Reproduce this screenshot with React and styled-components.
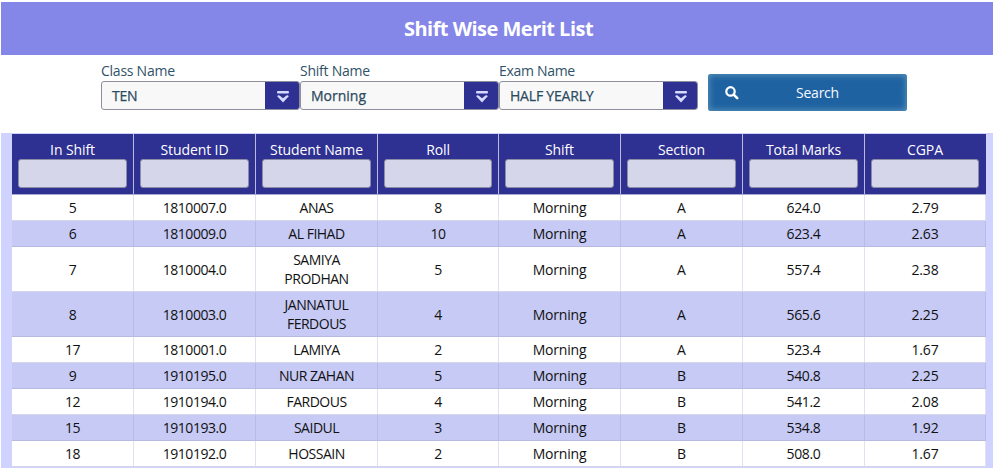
import React from "react";
import styled, { createGlobalStyle } from "styled-components";

const GlobalStyle = createGlobalStyle`
  * { box-sizing: border-box; }
  body {
    margin: 0;
    background: #fff;
    overflow: hidden;
    font-family: "Open Sans", "Noto Sans", sans-serif;
    font-size: 14px;
  }
`;

const Page = styled.main`
  height: 468px;
  padding: 2px 0 0 1px;
  overflow: hidden;
`;

const Banner = styled.h1`
  height: 53px;
  margin: 0;
  padding: 0 0 1px 3px;
  display: flex;
  align-items: center;
  justify-content: center;
  background: #8486e8;
  color: #fff;
  font-size: 20px;
  font-weight: 700;
  letter-spacing: -0.52px;
`;

const Filters = styled.form`
  display: flex;
  align-items: flex-start;
  height: 78px;
  padding: 6px 0 0 100px;
`;

const Field = styled.div`
  width: 199px;
`;

const FieldLabel = styled.label`
  display: block;
  height: 20px;
  line-height: 19px;
  color: #305268;
  letter-spacing: ${(p) => p.$track};
`;

const SelectBox = styled.div`
  display: flex;
  height: 29px;
  border: 1px solid #8d8f9f;
  border-radius: 3px;
  background: #f8f8f8;
  overflow: hidden;
`;

const SelectValue = styled.span`
  flex: 1;
  padding-left: 10px;
  line-height: 28px;
  color: #2b4a60;
  -webkit-text-stroke: 0.25px #2b4a60;
  letter-spacing: ${(p) => p.$track};
`;

const SelectTrigger = styled.span`
  width: 34px;
  padding: 2px 0 0 2px;
  display: flex;
  align-items: center;
  justify-content: center;
  background: #2e3092;
`;

const SearchButton = styled.button`
  display: flex;
  align-items: center;
  width: 199px;
  height: 37px;
  margin: 13px 0 0 10px;
  padding: 0 0 0 17px;
  border: 0;
  border-radius: 3px;
  background: #1f62a2;
  box-shadow: inset 0 0 6px 1px #5b93b8;
  color: #f4f9ff;
  font: inherit;
`;

const SearchText = styled.span`
  flex: 1;
  padding-right: 11px;
  text-align: center;
  letter-spacing: -0.25px;
`;

const Panel = styled.section`
  height: 400px;
  padding: 1px 7px 0 11px;
  background: #d0d2ff;
`;

const Table = styled.div`
  width: 974px;
`;

const Row = styled.div`
  display: grid;
  grid-template-columns: 122px 122px 122px 121px 122px 122px 122px 121px;
  height: ${(p) => (p.$tall ? 45 : 26)}px;
  background: ${(p) => (p.$striped ? "#c6caf5" : "#fff")};
  border-bottom: 1px solid ${(p) => (p.$striped ? "#b7bae0" : "#d5d6ee")};
`;

const HeadRow = styled(Row)`
  height: 61px;
  background: #2e3092;
  border-bottom-color: #a9aad0;
`;

const HeadCell = styled.div`
  padding: 6px 6px 0;
  border-right: 1px solid #b9badc;
  color: #fff;
  text-align: center;
  letter-spacing: -0.1px;
  &:last-child { border-right-color: #2e3092; }
`;

const HeadTitle = styled.div`
  height: 19px;
  line-height: 19px;
  white-space: nowrap;
`;

const FilterInput = styled.input`
  display: block;
  width: 100%;
  height: 29px;
  padding: 0 6px;
  border: 1px solid #8b8ca6;
  border-radius: 3px;
  background: #d5d6e9;
  font: inherit;
`;

const Cell = styled.div`
  display: flex;
  align-items: center;
  justify-content: center;
  padding: 0 6px;
  border-right: 1px solid ${(p) => (p.$striped ? "#b7bbe6" : "#e1e2ef")};
  color: #111;
  line-height: 19px;
  text-align: center;
  white-space: pre-line;
  letter-spacing: ${(p) => p.$track};
`;

const filters = [
  { label: "Class Name", value: "TEN", lt: "-0.25px", vt: "-0.2px" },
  { label: "Shift Name", value: "Morning", lt: "-0.25px", vt: "0" },
  { label: "Exam Name", value: "HALF YEARLY", lt: "-0.3px", vt: "-0.2px" },
];

const columns = ["In Shift", "Student ID", "Student Name", "Roll", "Shift", "Section", "Total Marks", "CGPA"];
const tracking = ["-0.5px", "-0.45px", "-0.5px", "-0.5px", "-0.2px", "0", "-0.35px", "-0.2px"];

const rows = [
  ["5", "1810007.0", "ANAS", "8", "Morning", "A", "624.0", "2.79"],
  ["6", "1810009.0", "AL FIHAD", "10", "Morning", "A", "623.4", "2.63"],
  ["7", "1810004.0", "SAMIYA\nPRODHAN", "5", "Morning", "A", "557.4", "2.38"],
  ["8", "1810003.0", "JANNATUL\nFERDOUS", "4", "Morning", "A", "565.6", "2.25"],
  ["17", "1810001.0", "LAMIYA", "2", "Morning", "A", "523.4", "1.67"],
  ["9", "1910195.0", "NUR ZAHAN", "5", "Morning", "B", "540.8", "2.25"],
  ["12", "1910194.0", "FARDOUS", "4", "Morning", "B", "541.2", "2.08"],
  ["15", "1910193.0", "SAIDUL", "3", "Morning", "B", "534.8", "1.92"],
  ["18", "1910192.0", "HOSSAIN", "2", "Morning", "B", "508.0", "1.67"],
];

const DropIcon = () => (
  <svg width="14" height="14" viewBox="0 0 14 14" fill="#d6daff">
    <rect x="1" y="1" width="12" height="2.4" rx="1" />
    <path d="M1.2 6.2Q2.2 4.6 3.6 5.6L7 8.2l3.4-2.6q1.4-1 2.4.6L7 12.4z" />
  </svg>
);

const SearchIcon = () => (
  <svg width="14" height="14" viewBox="0 0 14 14" fill="none" stroke="#fff">
    <circle cx="5.5" cy="5.4" r="4.2" strokeWidth="2.2" />
    <path d="M8.7 8.6l3.5 3.5" strokeWidth="2.6" strokeLinecap="round" />
  </svg>
);

export default function App() {
  return (
    <Page>
      <GlobalStyle />
      <Banner>Shift Wise Merit List</Banner>
      <Filters onSubmit={(e) => e.preventDefault()}>
        {filters.map((f) => (
          <Field key={f.label}>
            <FieldLabel $track={f.lt}>{f.label}</FieldLabel>
            <SelectBox>
              <SelectValue $track={f.vt}>{f.value}</SelectValue>
              <SelectTrigger><DropIcon /></SelectTrigger>
            </SelectBox>
          </Field>
        ))}
        <SearchButton>
          <SearchIcon />
          <SearchText>Search</SearchText>
        </SearchButton>
      </Filters>
      <Panel>
        <Table>
          <HeadRow>
            {columns.map((c) => (
              <HeadCell key={c}>
                <HeadTitle>{c}</HeadTitle>
                <FilterInput aria-label={c} />
              </HeadCell>
            ))}
          </HeadRow>
          {rows.map((r, i) => (
            <Row key={r[1]} $striped={i % 2 === 1} $tall={r[2].includes("\n")}>
              {r.map((v, j) => (
                <Cell key={j} $striped={i % 2 === 1} $track={tracking[j]}>{v}</Cell>
              ))}
            </Row>
          ))}
        </Table>
      </Panel>
    </Page>
  );
}
